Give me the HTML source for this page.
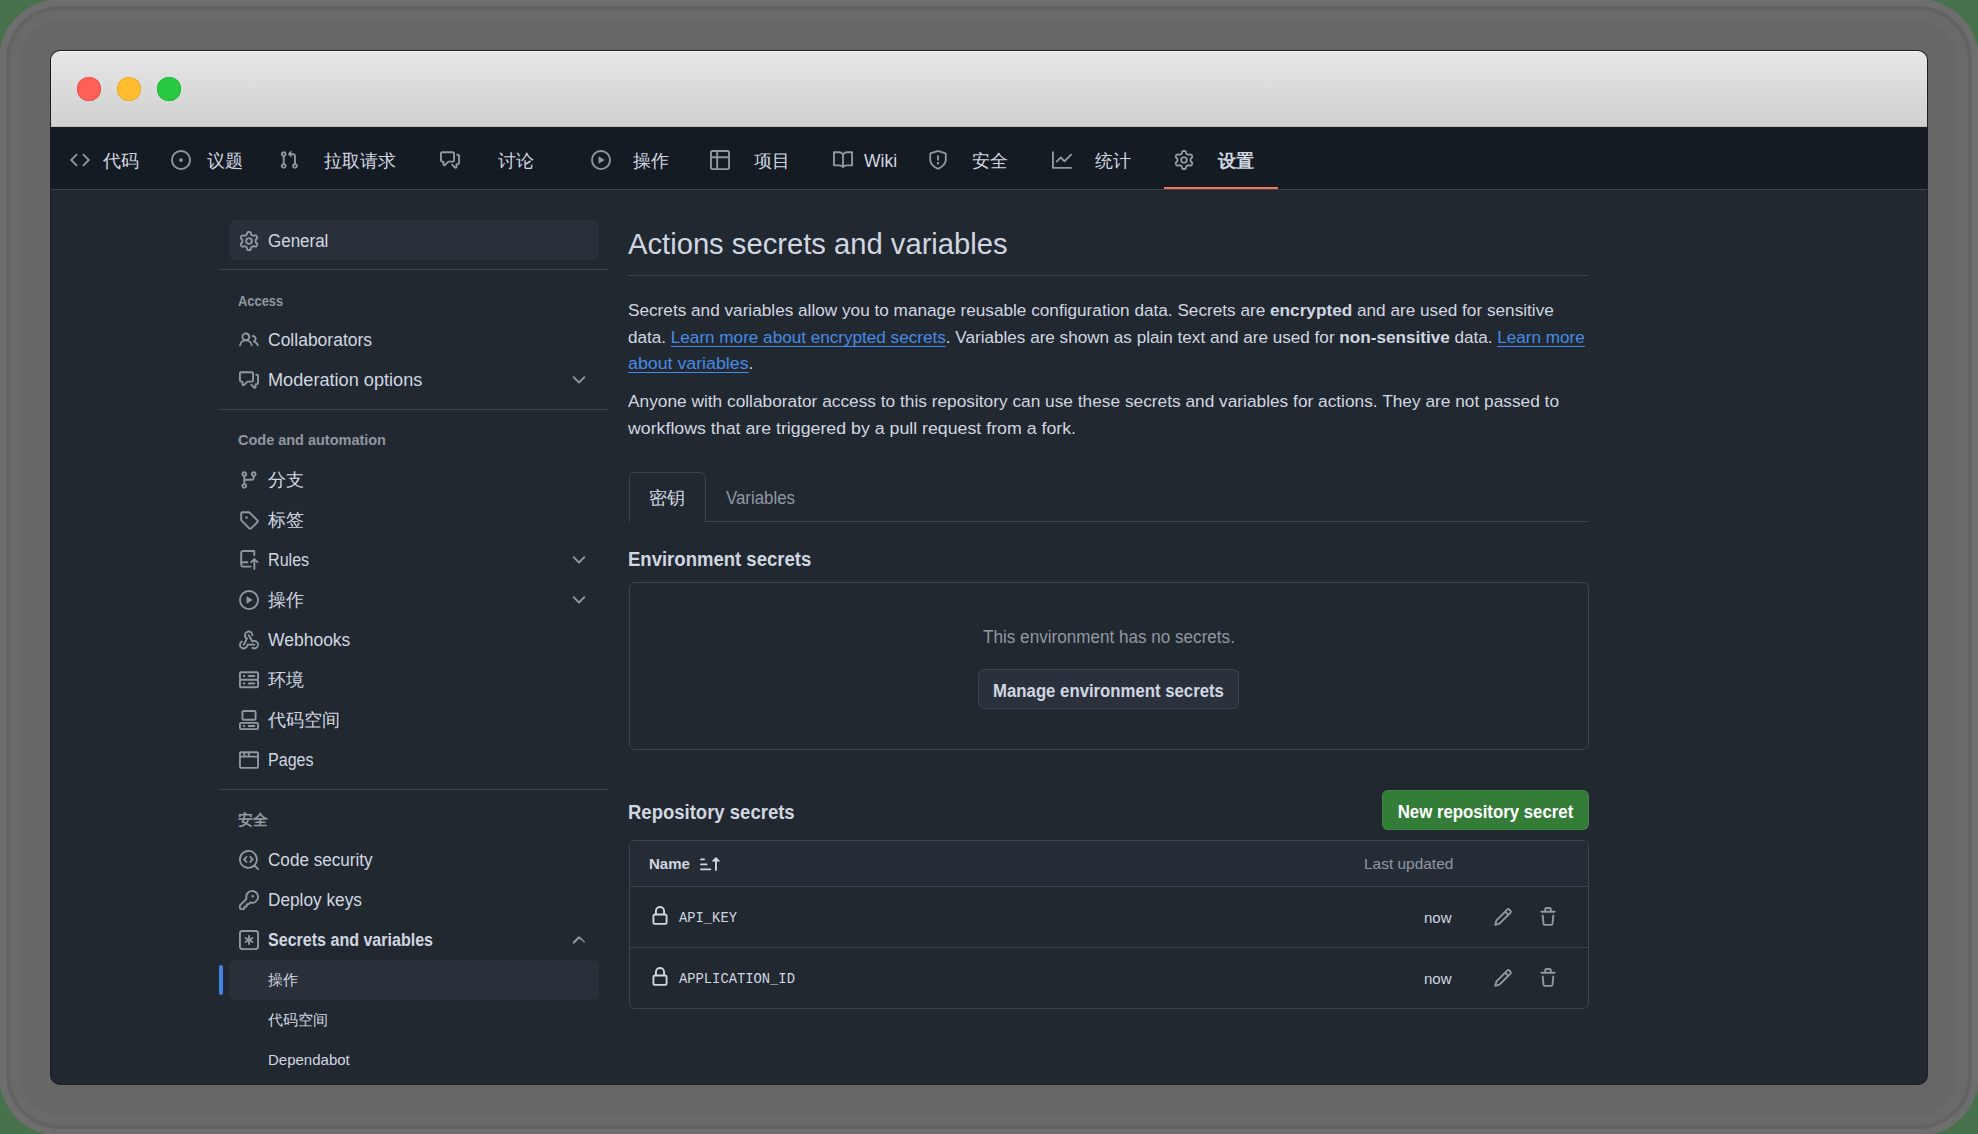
<!DOCTYPE html>
<html><head><meta charset="utf-8">
<style>
*{box-sizing:border-box;margin:0;padding:0}
html,body{width:1978px;height:1134px;overflow:hidden;background:#48724c;font-family:"Liberation Sans",sans-serif}
.a{position:absolute}
.t{white-space:nowrap;color:#d1d7e0}
b{font-weight:700}
u.l{color:#478be6;text-decoration:underline;text-underline-offset:3px;text-decoration-skip-ink:none}
.ring{position:absolute}
#win{position:absolute;left:51px;top:51px;width:1876px;height:1033px;border-radius:9px;overflow:hidden;background:#212830}
#in{position:absolute;left:-51px;top:-51px;width:1978px;height:1134px}
#title{position:absolute;left:51px;top:51px;width:1876px;height:76px;background:linear-gradient(#e6e6e6,#d0d0d0);border-top:1px solid #fafafa;box-shadow:inset 0 -1px 0 #bdbdbd}
.dot{position:absolute;top:77px;width:24px;height:24px;border-radius:50%}
#nav{position:absolute;left:51px;top:127px;width:1876px;height:63px;background:#151b23;border-bottom:1px solid #3d444d}
</style></head>
<body>
<div class="ring" style="left:-1px;top:-1px;width:1980px;height:1137px;border-radius:61px;background:#6e6e6e"></div><div class="ring" style="left:6px;top:6px;width:1966px;height:1123px;border-radius:54px;background:#636363"></div><div class="ring" style="left:10px;top:10px;width:1958px;height:1115px;border-radius:50px;background:#6a6a6a"></div><div class="ring" style="left:20px;top:20px;width:1938px;height:1095px;border-radius:40px;background:#676767"></div><div class="ring" style="left:50px;top:50px;width:1878px;height:1035px;border-radius:10px;background:#1e1e1e"></div>
<div id="win"><div id="in">
<div id="title"></div>
<div class="dot" style="left:77px;background:#ff5f57;box-shadow:inset 0 0 0 .6px #e0443e"></div>
<div class="dot" style="left:117px;background:#febc2e;box-shadow:inset 0 0 0 .6px #dea123"></div>
<div class="dot" style="left:157px;background:#28c840;box-shadow:inset 0 0 0 .6px #1aab29"></div>
<div id="nav"></div>
<svg class="a" style="left:70px;top:150px" width="20" height="20" viewBox="0 0 16 16" fill="#9198a1"><path d="m11.28 3.22 4.25 4.25a.75.75 0 0 1 0 1.06l-4.25 4.25a.749.749 0 0 1-1.275-.326.749.749 0 0 1 .215-.734L13.94 8l-3.72-3.72a.749.749 0 0 1 .326-1.275.749.749 0 0 1 .734.215Zm-6.56 0a.751.751 0 0 1 1.042.018.751.751 0 0 1 .018 1.042L2.06 8l3.72 3.72a.749.749 0 0 1-.326 1.275.749.749 0 0 1-.734-.215L.47 8.53a.75.75 0 0 1 0-1.06Z"/></svg><div class="a t" style="left:103px;top:146.0px;line-height:30px;font-size:17.5px;color:#d1d7e0;font-weight:400;">代码</div><svg class="a" style="left:171px;top:150px" width="20" height="20" viewBox="0 0 16 16" fill="#9198a1"><path d="M8 9.5a1.5 1.5 0 1 0 0-3 1.5 1.5 0 0 0 0 3Z"/><path d="M8 0a8 8 0 1 1 0 16A8 8 0 0 1 8 0ZM1.5 8a6.5 6.5 0 1 0 13 0 6.5 6.5 0 0 0-13 0Z"/></svg><div class="a t" style="left:207px;top:146.0px;line-height:30px;font-size:17.5px;color:#d1d7e0;font-weight:400;">议题</div><svg class="a" style="left:279px;top:150px" width="20" height="20" viewBox="0 0 16 16" fill="#9198a1"><path d="M1.5 3.25a2.25 2.25 0 1 1 3 2.122v5.256a2.251 2.251 0 1 1-1.5 0V5.372A2.25 2.25 0 0 1 1.5 3.25Zm5.677-.177L9.573.677A.25.25 0 0 1 10 .854V2.5h1A2.5 2.5 0 0 1 13.5 5v5.628a2.251 2.251 0 1 1-1.5 0V5a1 1 0 0 0-1-1h-1v1.646a.25.25 0 0 1-.427.177L7.177 3.427a.25.25 0 0 1 0-.354ZM3.75 2.5a.75.75 0 1 0 0 1.5.75.75 0 0 0 0-1.5Zm0 9.5a.75.75 0 1 0 0 1.5.75.75 0 0 0 0-1.5Zm8.25.75a.75.75 0 1 0 1.5 0 .75.75 0 0 0-1.5 0Z"/></svg><div class="a t" style="left:324px;top:146.0px;line-height:30px;font-size:17.5px;color:#d1d7e0;font-weight:400;">拉取请求</div><svg class="a" style="left:440px;top:150px" width="20" height="20" viewBox="0 0 16 16" fill="#9198a1"><path d="M1.75 1h8.5c.966 0 1.75.784 1.75 1.75v5.5A1.75 1.75 0 0 1 10.25 10H7.061l-2.574 2.573A1.458 1.458 0 0 1 2 11.543V10h-.25A1.75 1.75 0 0 1 0 8.25v-5.5C0 1.784.784 1 1.75 1ZM1.5 2.75v5.5c0 .138.112.25.25.25h1a.75.75 0 0 1 .75.75v2.19l2.72-2.72a.749.749 0 0 1 .53-.22h3.5a.25.25 0 0 0 .25-.25v-5.5a.25.25 0 0 0-.25-.25h-8.5a.25.25 0 0 0-.25.25Zm13 2a.25.25 0 0 0-.25-.25h-.5a.75.75 0 0 1 0-1.5h.5c.966 0 1.75.784 1.75 1.75v5.5A1.75 1.75 0 0 1 14.25 12H14v1.543a1.458 1.458 0 0 1-2.487 1.03L9.22 12.28a.749.749 0 0 1 .326-1.275.749.749 0 0 1 .734.215l2.22 2.22v-2.19a.75.75 0 0 1 .75-.75h1a.25.25 0 0 0 .25-.25Z"/></svg><div class="a t" style="left:498px;top:146.0px;line-height:30px;font-size:17.5px;color:#d1d7e0;font-weight:400;">讨论</div><svg class="a" style="left:591px;top:150px" width="20" height="20" viewBox="0 0 16 16" fill="#9198a1"><path d="M8 0a8 8 0 1 1 0 16A8 8 0 0 1 8 0ZM1.5 8a6.5 6.5 0 1 0 13 0 6.5 6.5 0 0 0-13 0Zm4.879-2.773 4.264 2.559a.25.25 0 0 1 0 .428l-4.264 2.559A.25.25 0 0 1 6 10.559V5.442a.25.25 0 0 1 .379-.215Z"/></svg><div class="a t" style="left:633px;top:146.0px;line-height:30px;font-size:17.5px;color:#d1d7e0;font-weight:400;">操作</div><svg class="a" style="left:710px;top:150px" width="20" height="20" viewBox="0 0 16 16" fill="#9198a1"><path d="M0 1.75C0 .784.784 0 1.75 0h12.5C15.216 0 16 .784 16 1.75v12.5A1.75 1.75 0 0 1 14.25 16H1.75A1.75 1.75 0 0 1 0 14.25ZM6.5 6.5v8h7.75a.25.25 0 0 0 .25-.25V6.5Zm8-1.5V1.75a.25.25 0 0 0-.25-.25H6.5V5Zm-13 1.5v7.75c0 .138.112.25.25.25H5v-8ZM5 5V1.5H1.75a.25.25 0 0 0-.25.25V5Z"/></svg><div class="a t" style="left:754px;top:146.0px;line-height:30px;font-size:17.5px;color:#d1d7e0;font-weight:400;">项目</div><svg class="a" style="left:833px;top:150px" width="20" height="20" viewBox="0 0 16 16" fill="#9198a1"><path d="M0 1.75A.75.75 0 0 1 .75 1h4.253c1.227 0 2.317.59 3 1.501A3.743 3.743 0 0 1 11.006 1h4.245a.75.75 0 0 1 .75.75v10.5a.75.75 0 0 1-.75.75h-4.507a2.25 2.25 0 0 0-1.591.659l-.622.621a.75.75 0 0 1-1.06 0l-.622-.621A2.25 2.25 0 0 0 5.258 13H.75a.75.75 0 0 1-.75-.75Zm7.251 10.324.004-5.073-.002-2.253A2.25 2.25 0 0 0 5.003 2.5H1.5v9h3.757a3.75 3.75 0 0 1 1.994.574ZM8.755 4.75l-.004 7.322a3.752 3.752 0 0 1 1.992-.572H14.5v-9h-3.495a2.25 2.25 0 0 0-2.25 2.25Z"/></svg><div class="a t" style="left:864px;top:146.0px;line-height:30px;font-size:17.5px;color:#d1d7e0;font-weight:400;">Wiki</div><svg class="a" style="left:928px;top:150px" width="20" height="20" viewBox="0 0 16 16" fill="#9198a1"><path d="M7.467.133a1.748 1.748 0 0 1 1.066 0l5.25 1.68A1.75 1.75 0 0 1 15 3.48V7c0 1.566-.32 3.182-1.303 4.682-.983 1.498-2.585 2.813-5.032 3.855a1.697 1.697 0 0 1-1.33 0c-2.447-1.042-4.049-2.357-5.032-3.855C1.32 10.182 1 8.566 1 7V3.48a1.755 1.755 0 0 1 1.217-1.667Zm.61 1.429a.25.25 0 0 0-.153 0l-5.25 1.68a.25.25 0 0 0-.174.238V7c0 1.358.275 2.666 1.057 3.86.784 1.194 2.121 2.34 4.366 3.297a.196.196 0 0 0 .154 0c2.245-.956 3.582-2.104 4.366-3.298C13.225 9.666 13.5 8.36 13.5 7V3.48a.251.251 0 0 0-.174-.237l-5.25-1.68ZM8.75 4.750v3a.75.75 0 0 1-1.5 0v-3a.75.75 0 0 1 1.5 0ZM9 10.5a1 1 0 1 1-2 0 1 1 0 0 1 2 0Z"/></svg><div class="a t" style="left:972px;top:146.0px;line-height:30px;font-size:17.5px;color:#d1d7e0;font-weight:400;">安全</div><svg class="a" style="left:1052px;top:150px" width="20" height="20" viewBox="0 0 16 16" fill="#9198a1"><path d="M1.5 1.75V13.5h13.75a.75.75 0 0 1 0 1.5H.75a.75.75 0 0 1-.75-.75V1.75a.75.75 0 0 1 1.5 0Zm14.28 2.53-5.25 5.25a.75.75 0 0 1-1.060 0L7 7.06 4.28 9.78a.751.751 0 0 1-1.042-.018.751.751 0 0 1-.018-1.042l3.25-3.25a.75.75 0 0 1 1.06 0L10 7.94l4.72-4.72a.751.751 0 0 1 1.042.018.751.751 0 0 1 .018 1.042Z"/></svg><div class="a t" style="left:1095px;top:146.0px;line-height:30px;font-size:17.5px;color:#d1d7e0;font-weight:400;">统计</div><svg class="a" style="left:1174px;top:150px" width="20" height="20" viewBox="0 0 16 16" fill="#9198a1"><path d="M8 0a8.2 8.2 0 0 1 .701.031C9.444.095 9.99.645 10.16 1.29l.288 1.107c.018.066.079.158.212.224.231.114.454.243.668.386.123.082.233.09.299.071l1.103-.303c.644-.176 1.392.021 1.82.63.27.385.506.792.704 1.218.315.675.111 1.422-.364 1.891l-.814.806c-.049.048-.098.147-.088.294.016.257.016.515 0 .772-.01.147.038.246.088.294l.814.806c.475.469.679 1.216.364 1.891a7.977 7.977 0 0 1-.704 1.217c-.428.61-1.176.807-1.820.63l-1.102-.302c-.067-.019-.177-.011-.3.071a5.909 5.909 0 0 1-.668.386c-.133.066-.194.158-.211.224l-.29 1.106c-.168.646-.715 1.196-1.458 1.26a8.006 8.006 0 0 1-1.402 0c-.743-.064-1.289-.614-1.458-1.26l-.289-1.106c-.018-.066-.079-.158-.212-.224a5.738 5.738 0 0 1-.668-.386c-.123-.082-.233-.09-.299-.071l-1.103.303c-.644.176-1.392-.021-1.82-.63a8.12 8.12 0 0 1-.704-1.218c-.315-.675-.111-1.422.363-1.891l.815-.806c.05-.048.098-.147.088-.294a6.214 6.214 0 0 1 0-.772c.01-.147-.038-.246-.088-.294l-.815-.806C.635 6.045.431 5.298.746 4.623a7.92 7.92 0 0 1 .704-1.217c.428-.61 1.176-.807 1.82-.63l1.102.302c.067.019.177.011.3-.071.214-.143.437-.272.668-.386.133-.066.194-.158.211-.224l.29-1.106C6.009.645 6.556.095 7.299.03 7.53.01 7.764 0 8 0Zm-.571 1.525c-.036.003-.108.036-.137.146l-.289 1.105c-.147.561-.549.967-.998 1.189-.173.086-.34.183-.5.29-.417.278-.97.423-1.529.27l-1.103-.303c-.109-.03-.175.016-.195.045-.22.312-.412.644-.573.99-.014.031-.021.11.059.19l.815.806c.411.406.562.957.53 1.456a4.709 4.709 0 0 0 0 .582c.032.499-.119 1.05-.53 1.456l-.815.806c-.081.08-.073.159-.059.19.162.346.353.677.573.989.02.03.085.076.195.046l1.102-.303c.56-.153 1.113-.008 1.53.27.161.107.328.204.501.29.447.222.85.629.997 1.189l.289 1.105c.029.109.101.143.137.146a6.6 6.6 0 0 0 1.142 0c.036-.003.108-.036.137-.146l.289-1.105c.147-.561.549-.967.998-1.189.173-.086.34-.183.5-.29.417-.278.97-.423 1.529-.27l1.103.303c.109.029.175-.016.195-.045.22-.313.411-.644.573-.99.014-.031.021-.11-.059-.19l-.815-.806c-.411-.406-.562-.957-.53-1.456a4.709 4.709 0 0 0 0-.582c-.032-.499.119-1.05.53-1.456l.815-.806c.081-.08.073-.159.059-.19a6.464 6.464 0 0 0-.573-.989c-.02-.03-.085-.076-.195-.046l-1.102.303c-.56.153-1.113.008-1.53-.27a4.44 4.44 0 0 0-.501-.29c-.447-.222-.85-.629-.997-1.189l-.289-1.105c-.029-.11-.101-.143-.137-.146a6.6 6.6 0 0 0-1.142 0ZM11 8a3 3 0 1 1-6 0 3 3 0 0 1 6 0ZM9.5 8a1.5 1.5 0 1 0-3.001.001A1.5 1.5 0 0 0 9.5 8Z"/></svg><div class="a t" style="left:1218px;top:146.0px;line-height:30px;font-size:17.5px;color:#d1d7e0;font-weight:700;">设置</div><div class="a" style="left:1164px;top:187px;width:114px;height:2px;background:#ec775c"></div><div class="a" style="left:229px;top:220px;width:370px;height:40px;background:#2a3039;border-radius:6px"></div><svg class="a" style="left:239px;top:231px" width="20" height="20" viewBox="0 0 16 16" fill="#9198a1"><path d="M8 0a8.2 8.2 0 0 1 .701.031C9.444.095 9.99.645 10.16 1.29l.288 1.107c.018.066.079.158.212.224.231.114.454.243.668.386.123.082.233.09.299.071l1.103-.303c.644-.176 1.392.021 1.82.63.27.385.506.792.704 1.218.315.675.111 1.422-.364 1.891l-.814.806c-.049.048-.098.147-.088.294.016.257.016.515 0 .772-.01.147.038.246.088.294l.814.806c.475.469.679 1.216.364 1.891a7.977 7.977 0 0 1-.704 1.217c-.428.61-1.176.807-1.820.63l-1.102-.302c-.067-.019-.177-.011-.3.071a5.909 5.909 0 0 1-.668.386c-.133.066-.194.158-.211.224l-.29 1.106c-.168.646-.715 1.196-1.458 1.26a8.006 8.006 0 0 1-1.402 0c-.743-.064-1.289-.614-1.458-1.26l-.289-1.106c-.018-.066-.079-.158-.212-.224a5.738 5.738 0 0 1-.668-.386c-.123-.082-.233-.09-.299-.071l-1.103.303c-.644.176-1.392-.021-1.82-.63a8.12 8.12 0 0 1-.704-1.218c-.315-.675-.111-1.422.363-1.891l.815-.806c.05-.048.098-.147.088-.294a6.214 6.214 0 0 1 0-.772c.01-.147-.038-.246-.088-.294l-.815-.806C.635 6.045.431 5.298.746 4.623a7.92 7.92 0 0 1 .704-1.217c.428-.61 1.176-.807 1.82-.63l1.102.302c.067.019.177.011.3-.071.214-.143.437-.272.668-.386.133-.066.194-.158.211-.224l.29-1.106C6.009.645 6.556.095 7.299.03 7.53.01 7.764 0 8 0Zm-.571 1.525c-.036.003-.108.036-.137.146l-.289 1.105c-.147.561-.549.967-.998 1.189-.173.086-.34.183-.5.29-.417.278-.97.423-1.529.27l-1.103-.303c-.109-.03-.175.016-.195.045-.22.312-.412.644-.573.99-.014.031-.021.11.059.19l.815.806c.411.406.562.957.53 1.456a4.709 4.709 0 0 0 0 .582c.032.499-.119 1.05-.53 1.456l-.815.806c-.081.08-.073.159-.059.19.162.346.353.677.573.989.02.03.085.076.195.046l1.102-.303c.56-.153 1.113-.008 1.53.27.161.107.328.204.501.29.447.222.85.629.997 1.189l.289 1.105c.029.109.101.143.137.146a6.6 6.6 0 0 0 1.142 0c.036-.003.108-.036.137-.146l.289-1.105c.147-.561.549-.967.998-1.189.173-.086.34-.183.5-.29.417-.278.97-.423 1.529-.27l1.103.303c.109.029.175-.016.195-.045.22-.313.411-.644.573-.99.014-.031.021-.11-.059-.19l-.815-.806c-.411-.406-.562-.957-.53-1.456a4.709 4.709 0 0 0 0-.582c-.032-.499.119-1.05.53-1.456l.815-.806c.081-.08.073-.159.059-.19a6.464 6.464 0 0 0-.573-.989c-.02-.03-.085-.076-.195-.046l-1.102.303c-.56.153-1.113.008-1.53-.27a4.44 4.44 0 0 0-.501-.29c-.447-.222-.85-.629-.997-1.189l-.289-1.105c-.029-.11-.101-.143-.137-.146a6.6 6.6 0 0 0-1.142 0ZM11 8a3 3 0 1 1-6 0 3 3 0 0 1 6 0ZM9.5 8a1.5 1.5 0 1 0-3.001.001A1.5 1.5 0 0 0 9.5 8Z"/></svg><div class="a t" style="left:268px;top:226.0px;line-height:30px;font-size:17.5px;color:#d1d7e0;font-weight:400;;transform:scaleX(0.97);transform-origin:0 50%">General</div><div class="a" style="left:219px;top:269px;width:390px;height:1px;background:#3d444d"></div><div class="a t" style="left:238px;top:286.0px;line-height:30px;font-size:15px;color:#9198a1;font-weight:700;;transform:scaleX(0.86);transform-origin:0 50%">Access</div><svg class="a" style="left:239px;top:330px" width="20" height="20" viewBox="0 0 16 16" fill="#9198a1"><path d="M2 5.5a3.5 3.5 0 1 1 5.898 2.549 5.508 5.508 0 0 1 3.034 4.084.75.75 0 1 1-1.482.235 4 4 0 0 0-7.9 0 .75.75 0 0 1-1.482-.236A5.507 5.507 0 0 1 3.102 8.05 3.493 3.493 0 0 1 2 5.5ZM11 4a3.001 3.001 0 0 1 2.22 5.018 5.01 5.01 0 0 1 2.56 3.012.749.749 0 0 1-.885.954.752.752 0 0 1-.549-.514 3.507 3.507 0 0 0-2.522-2.372.75.75 0 0 1-.574-.73v-.352a.75.75 0 0 1 .416-.672A1.5 1.5 0 0 0 11 5.5.75.75 0 0 1 11 4Zm-5.5-.5a2 2 0 1 0-.001 3.999A2 2 0 0 0 5.5 3.5Z"/></svg><div class="a t" style="left:268px;top:325.0px;line-height:30px;font-size:17.5px;color:#d1d7e0;font-weight:400;">Collaborators</div><svg class="a" style="left:239px;top:370px" width="20" height="20" viewBox="0 0 16 16" fill="#9198a1"><path d="M1.75 1h8.5c.966 0 1.75.784 1.75 1.75v5.5A1.75 1.75 0 0 1 10.25 10H7.061l-2.574 2.573A1.458 1.458 0 0 1 2 11.543V10h-.25A1.75 1.75 0 0 1 0 8.25v-5.5C0 1.784.784 1 1.75 1ZM1.5 2.75v5.5c0 .138.112.25.25.25h1a.75.75 0 0 1 .75.75v2.19l2.72-2.72a.749.749 0 0 1 .53-.22h3.5a.25.25 0 0 0 .25-.25v-5.5a.25.25 0 0 0-.25-.25h-8.5a.25.25 0 0 0-.25.25Zm13 2a.25.25 0 0 0-.25-.25h-.5a.75.75 0 0 1 0-1.5h.5c.966 0 1.75.784 1.75 1.75v5.5A1.75 1.75 0 0 1 14.25 12H14v1.543a1.458 1.458 0 0 1-2.487 1.03L9.22 12.28a.749.749 0 0 1 .326-1.275.749.749 0 0 1 .734.215l2.22 2.22v-2.19a.75.75 0 0 1 .75-.75h1a.25.25 0 0 0 .25-.25Z"/></svg><div class="a t" style="left:268px;top:365.0px;line-height:30px;font-size:17.5px;color:#d1d7e0;font-weight:400;;transform:scaleX(1.037);transform-origin:0 50%">Moderation options</div><svg class="a" style="left:569px;top:370px" width="20" height="20" viewBox="0 0 16 16" fill="#9198a1"><path d="M12.78 5.22a.749.749 0 0 1 0 1.06l-4.25 4.25a.749.749 0 0 1-1.06 0L3.22 6.28a.749.749 0 0 1 .326-1.275.749.749 0 0 1 .734.215L8 8.939l3.72-3.719a.749.749 0 0 1 1.06 0Z"/></svg><div class="a" style="left:219px;top:409px;width:390px;height:1px;background:#3d444d"></div><div class="a t" style="left:238px;top:425.0px;line-height:30px;font-size:15px;color:#9198a1;font-weight:700;;transform:scaleX(0.965);transform-origin:0 50%">Code and automation</div><svg class="a" style="left:239px;top:470px" width="20" height="20" viewBox="0 0 16 16" fill="#9198a1"><path d="M9.5 3.25a2.25 2.25 0 1 1 3 2.122V6A2.5 2.5 0 0 1 10 8.5H6a1 1 0 0 0-1 1v1.128a2.251 2.251 0 1 1-1.5 0V5.372a2.25 2.25 0 1 1 1.5 0v1.836A2.493 2.493 0 0 1 6 7h4a1 1 0 0 0 1-1v-.628A2.25 2.25 0 0 1 9.5 3.25Zm-6 0a.75.75 0 1 0 1.5 0 .75.75 0 0 0-1.5 0Zm8.25-.75a.75.75 0 1 0 0 1.5.75.75 0 0 0 0-1.5ZM4.25 12a.75.75 0 1 0 0 1.5.75.75 0 0 0 0-1.5Z"/></svg><div class="a t" style="left:268px;top:465.0px;line-height:30px;font-size:17.5px;color:#d1d7e0;font-weight:400;">分支</div><svg class="a" style="left:239px;top:510px" width="20" height="20" viewBox="0 0 16 16" fill="#9198a1"><path d="M1 7.775V2.75C1 1.784 1.784 1 2.75 1h5.025c.464 0 .91.184 1.238.513l6.25 6.25a1.75 1.75 0 0 1 0 2.474l-5.026 5.026a1.75 1.75 0 0 1-2.474 0l-6.25-6.25A1.752 1.752 0 0 1 1 7.775Zm1.5 0c0 .066.026.13.073.177l6.25 6.25a.25.25 0 0 0 .354 0l5.025-5.025a.25.25 0 0 0 0-.354l-6.25-6.25a.25.25 0 0 0-.177-.073H2.75a.25.25 0 0 0-.25.25ZM6 5a1 1 0 1 1 0 2 1 1 0 0 1 0-2Z"/></svg><div class="a t" style="left:268px;top:505.0px;line-height:30px;font-size:17.5px;color:#d1d7e0;font-weight:400;">标签</div><svg class="a" style="left:239px;top:550px" width="20" height="20" viewBox="0 0 16 16" fill="#9198a1"><path d="M1 2.5A2.5 2.5 0 0 1 3.5 0h8.75a.75.75 0 0 1 .75.75v3.5a.75.75 0 0 1-1.5 0V1.5h-8a1 1 0 0 0-1 1v6.708A2.492 2.492 0 0 1 3.5 9h3.25a.75.75 0 0 1 0 1.5H3.5a1 1 0 0 0 0 2h5.75a.75.75 0 0 1 0 1.5H3.5A2.5 2.5 0 0 1 1 11.5Zm13.23 7.79h-.001l-1.224-1.224v6.184a.75.75 0 0 1-1.5 0V9.066L10.28 10.29a.75.75 0 0 1-1.060-1.061l2.505-2.504a.75.75 0 0 1 1.06 0L15.29 9.23a.751.751 0 0 1-.018 1.042.751.751 0 0 1-1.042.018Z"/></svg><div class="a t" style="left:268px;top:545.0px;line-height:30px;font-size:17.5px;color:#d1d7e0;font-weight:400;;transform:scaleX(0.92);transform-origin:0 50%">Rules</div><svg class="a" style="left:569px;top:550px" width="20" height="20" viewBox="0 0 16 16" fill="#9198a1"><path d="M12.78 5.22a.749.749 0 0 1 0 1.06l-4.25 4.25a.749.749 0 0 1-1.06 0L3.22 6.28a.749.749 0 0 1 .326-1.275.749.749 0 0 1 .734.215L8 8.939l3.72-3.719a.749.749 0 0 1 1.06 0Z"/></svg><svg class="a" style="left:239px;top:590px" width="20" height="20" viewBox="0 0 16 16" fill="#9198a1"><path d="M8 0a8 8 0 1 1 0 16A8 8 0 0 1 8 0ZM1.5 8a6.5 6.5 0 1 0 13 0 6.5 6.5 0 0 0-13 0Zm4.879-2.773 4.264 2.559a.25.25 0 0 1 0 .428l-4.264 2.559A.25.25 0 0 1 6 10.559V5.442a.25.25 0 0 1 .379-.215Z"/></svg><div class="a t" style="left:268px;top:585.0px;line-height:30px;font-size:17.5px;color:#d1d7e0;font-weight:400;">操作</div><svg class="a" style="left:569px;top:590px" width="20" height="20" viewBox="0 0 16 16" fill="#9198a1"><path d="M12.78 5.22a.749.749 0 0 1 0 1.06l-4.25 4.25a.749.749 0 0 1-1.06 0L3.22 6.28a.749.749 0 0 1 .326-1.275.749.749 0 0 1 .734.215L8 8.939l3.72-3.719a.749.749 0 0 1 1.06 0Z"/></svg><svg class="a" style="left:239px;top:630px" width="20" height="20" viewBox="0 0 16 16" fill="#9198a1"><path d="M5.5 4.25a2.25 2.25 0 0 1 4.5 0 .75.75 0 0 0 1.5 0 3.75 3.75 0 1 0-6.14 2.889l-2.272 4.258a.75.75 0 0 0 1.324.706L7 7.25a.75.75 0 0 0-.309-1.015A2.25 2.25 0 0 1 5.5 4.25Z"/><path d="M7.364 3.607a.75.75 0 0 1 1.03.257l2.608 4.349a3.75 3.75 0 1 1-.628 6.785.75.75 0 0 1 .752-1.299 2.25 2.25 0 1 0-.033-3.88.75.75 0 0 1-1.03-.256L7.107 4.636a.75.75 0 0 1 .257-1.030Z"/><path d="M2.9 8.776A.75.75 0 0 1 2.625 9.8 2.25 2.25 0 1 0 6 11.75a.75.75 0 0 1 .75-.751h5.5a.75.75 0 0 1 0 1.5H7.425a3.751 3.751 0 1 1-5.550-3.998.75.75 0 0 1 1.024.274Z"/></svg><div class="a t" style="left:268px;top:625.0px;line-height:30px;font-size:17.5px;color:#d1d7e0;font-weight:400;">Webhooks</div><svg class="a" style="left:239px;top:670px" width="20" height="20" viewBox="0 0 16 16" fill="#9198a1"><path d="M1.75 1h12.5c.966 0 1.75.784 1.75 1.75v4c0 .372-.116.717-.314 1 .198.283.314.628.314 1v4a1.75 1.75 0 0 1-1.75 1.75H1.75A1.75 1.75 0 0 1 0 12.75v-4c0-.358.109-.707.314-1a1.739 1.739 0 0 1-.314-1v-4C0 1.784.784 1 1.75 1ZM1.5 2.75v4c0 .138.112.25.25.25h12.5a.25.25 0 0 0 .25-.25v-4a.25.25 0 0 0-.25-.25H1.75a.25.25 0 0 0-.25.25Zm.25 5.75a.25.25 0 0 0-.25.25v4c0 .138.112.25.25.25h12.5a.25.25 0 0 0 .25-.25v-4a.25.25 0 0 0-.25-.25ZM7 4.75A.75.75 0 0 1 7.75 4h4.5a.75.75 0 0 1 0 1.5h-4.5A.75.75 0 0 1 7 4.75ZM7.75 10h4.5a.75.75 0 0 1 0 1.5h-4.5a.75.75 0 0 1 0-1.5ZM3 4.750A.75.75 0 0 1 3.75 4h.5a.75.75 0 0 1 0 1.5h-.5A.75.75 0 0 1 3 4.75ZM3.75 10h.5a.75.75 0 0 1 0 1.5h-.5a.75.75 0 0 1 0-1.5Z"/></svg><div class="a t" style="left:268px;top:665.0px;line-height:30px;font-size:17.5px;color:#d1d7e0;font-weight:400;">环境</div><svg class="a" style="left:239px;top:710px" width="20" height="20" viewBox="0 0 16 16" fill="#9198a1"><path d="M0 11.25c0-.966.784-1.75 1.75-1.75h12.5c.966 0 1.75.784 1.75 1.75v3A1.75 1.75 0 0 1 14.25 16H1.75A1.75 1.75 0 0 1 0 14.25Zm2-9.5C2 .784 2.784 0 3.75 0h8.5C13.216 0 14 .784 14 1.75v5a1.75 1.75 0 0 1-1.75 1.75h-8.5A1.75 1.75 0 0 1 2 6.75Zm1.75-.25a.25.25 0 0 0-.25.25v5c0 .138.112.25.25.25h8.5a.25.25 0 0 0 .25-.25v-5a.25.25 0 0 0-.25-.25Zm-2 9.5a.25.25 0 0 0-.25.25v3c0 .138.112.25.25.25h12.5a.25.25 0 0 0 .25-.25v-3a.25.25 0 0 0-.25-.25Z"/><path d="M7 12.75a.75.75 0 0 1 .75-.75h4.5a.75.75 0 0 1 0 1.5h-4.5a.75.75 0 0 1-.75-.75Zm-4 0a.75.75 0 0 1 .75-.75h.5a.75.75 0 0 1 0 1.5h-.5a.75.75 0 0 1-.75-.75Z"/></svg><div class="a t" style="left:268px;top:705.0px;line-height:30px;font-size:17.5px;color:#d1d7e0;font-weight:400;">代码空间</div><svg class="a" style="left:239px;top:750px" width="20" height="20" viewBox="0 0 16 16" fill="#9198a1"><path d="M0 2.75C0 1.784.784 1 1.75 1h12.5c.966 0 1.75.784 1.75 1.75v10.5A1.75 1.75 0 0 1 14.25 15H1.75A1.75 1.75 0 0 1 0 13.25ZM14.5 6h-13v7.25c0 .138.112.25.25.25h12.5a.25.25 0 0 0 .25-.25Zm-6-3.5v2h6V2.75a.25.25 0 0 0-.25-.25ZM5 2.5v2h2v-2Zm-3.25 0a.25.25 0 0 0-.25.25V4.5h2v-2Z"/></svg><div class="a t" style="left:268px;top:745.0px;line-height:30px;font-size:17.5px;color:#d1d7e0;font-weight:400;;transform:scaleX(0.917);transform-origin:0 50%">Pages</div><div class="a" style="left:219px;top:789px;width:390px;height:1px;background:#3d444d"></div><div class="a t" style="left:238px;top:805.0px;line-height:30px;font-size:15px;color:#9198a1;font-weight:700;">安全</div><svg class="a" style="left:239px;top:850px" width="20" height="20" viewBox="0 0 16 16" fill="#9198a1"><path d="M8.47 4.97a.75.75 0 0 0 0 1.06L9.94 7.5 8.47 8.97a.75.75 0 1 0 1.06 1.06l2-2a.75.75 0 0 0 0-1.06l-2-2a.75.75 0 0 0-1.06 0ZM6.53 6.03a.75.75 0 0 0-1.06-1.06l-2 2a.75.75 0 0 0 0 1.06l2 2a.75.75 0 1 0 1.06-1.06L5.06 7.5l1.47-1.47Z"/><path d="M12.246 13.307a7.501 7.501 0 1 1 1.06-1.060l2.474 2.473a.749.749 0 0 1-.326 1.275.749.749 0 0 1-.734-.215ZM1.5 7.5a6.002 6.002 0 0 0 3.725 5.552 6.002 6.002 0 0 0 6.112-.988 6 6 0 0 0 1.063-1.088A6.002 6.002 0 0 0 7.5 1.5a6 6 0 0 0-6 6Z"/></svg><div class="a t" style="left:268px;top:845.0px;line-height:30px;font-size:17.5px;color:#d1d7e0;font-weight:400;;transform:scaleX(0.978);transform-origin:0 50%">Code security</div><svg class="a" style="left:239px;top:890px" width="20" height="20" viewBox="0 0 16 16" fill="#9198a1"><path d="M10.5 0a5.499 5.499 0 1 1-1.288 10.848l-.932.932a.749.749 0 0 1-.53.22H7v.75a.749.749 0 0 1-.22.53l-.5.5a.749.749 0 0 1-.53.22H5v.75a.749.749 0 0 1-.22.53l-.5.5a.749.749 0 0 1-.53.22h-2A1.75 1.75 0 0 1 0 14.25v-2c0-.199.079-.389.22-.53l4.932-4.932A5.5 5.5 0 0 1 10.5 0Zm-4 5.5c-.001.431.069.86.205 1.269a.75.75 0 0 1-.181.768L1.5 12.56v1.69c0 .138.112.25.25.25h1.69l.06-.06v-1.19a.75.75 0 0 1 .75-.75h1.19l.06-.06v-1.19a.75.75 0 0 1 .75-.75h1.19l1.023-1.025a.75.75 0 0 1 .768-.18A4 4 0 1 0 6.5 5.5ZM11 6a1 1 0 1 1 0-2 1 1 0 0 1 0 2Z"/></svg><div class="a t" style="left:268px;top:885.0px;line-height:30px;font-size:17.5px;color:#d1d7e0;font-weight:400;;transform:scaleX(0.985);transform-origin:0 50%">Deploy keys</div><svg class="a" style="left:239px;top:930px" width="20" height="20" viewBox="0 0 16 16" fill="#9198a1"><path d="M0 2.75A2.75 2.75 0 0 1 2.75 0h10.5A2.75 2.75 0 0 1 16 2.75v10.5A2.75 2.75 0 0 1 13.25 16H2.75A2.75 2.75 0 0 1 0 13.25ZM2.75 1.5c-.69 0-1.25.56-1.25 1.25v10.5c0 .69.56 1.25 1.25 1.25h10.5c.69 0 1.25-.56 1.25-1.25V2.75c0-.69-.56-1.25-1.25-1.25Z"/><path d="M8 4a.75.75 0 0 1 .75.75V6.7l1.69-.975a.75.75 0 0 1 .75 1.3L9.5 8l1.69.976a.75.75 0 0 1-.75 1.298L8.75 9.3v1.951a.75.75 0 0 1-1.5 0V9.299l-1.69.976a.75.75 0 0 1-.75-1.3L6.5 8l-1.69-.975a.75.75 0 0 1 .75-1.3l1.69.976V4.75A.75.75 0 0 1 8 4Z"/></svg><div class="a t" style="left:268px;top:925.0px;line-height:30px;font-size:17.5px;color:#d1d7e0;font-weight:700;;transform:scaleX(0.917);transform-origin:0 50%">Secrets and variables</div><svg class="a" style="left:569px;top:930px" width="20" height="20" viewBox="0 0 16 16" fill="#9198a1"><path d="M3.22 10.53a.749.749 0 0 1 0-1.06l4.25-4.25a.749.749 0 0 1 1.06 0l4.25 4.25a.749.749 0 0 1-1.275.326.749.749 0 0 1-.215-.734L8 7.061l-3.72 3.719a.749.749 0 0 1-1.06 0Z"/></svg><div class="a" style="left:229px;top:960px;width:370px;height:40px;background:#2a3039;border-radius:6px"></div><div class="a" style="left:219px;top:965px;width:4px;height:30px;background:#4184e4;border-radius:2px"></div><div class="a t" style="left:268px;top:965.0px;line-height:30px;font-size:15px;color:#d1d7e0;font-weight:400;">操作</div><div class="a t" style="left:268px;top:1005.0px;line-height:30px;font-size:15px;color:#d1d7e0;font-weight:400;">代码空间</div><div class="a t" style="left:268px;top:1045.0px;line-height:30px;font-size:15px;color:#d1d7e0;font-weight:400;">Dependabot</div><div class="a t" style="left:628px;top:224.0px;line-height:40px;font-size:29.2px;color:#d1d7e0;font-weight:400;">Actions secrets and variables</div><div class="a" style="left:628px;top:275px;width:960px;height:1px;background:#3d444d"></div><div class="a t" style="left:628px;top:297px;line-height:26.5px;font-size:17.2px;transform:scaleX(1.0);transform-origin:0 50%">Secrets and variables allow you to manage reusable configuration data. Secrets are <b>encrypted</b> and are used for sensitive</div><div class="a t" style="left:628px;top:323.5px;line-height:26.5px;font-size:17.2px;transform:scaleX(0.9958);transform-origin:0 50%">data. <u class="l">Learn more about encrypted secrets</u>. Variables are shown as plain text and are used for <b>non-sensitive</b> data. <u class="l">Learn more</u></div><div class="a t" style="left:628px;top:350px;line-height:26.5px;font-size:17.2px;transform:scaleX(1.034);transform-origin:0 50%"><u class="l">about variables</u>.</div><div class="a t" style="left:628px;top:388px;line-height:26.5px;font-size:17.2px;transform:scaleX(1.006);transform-origin:0 50%">Anyone with collaborator access to this repository can use these secrets and variables for actions. They are not passed to</div><div class="a t" style="left:628px;top:414.5px;line-height:26.5px;font-size:17.2px;transform:scaleX(1.033);transform-origin:0 50%">workflows that are triggered by a pull request from a fork.</div><div class="a" style="left:705px;top:521px;width:883px;height:1px;background:#3d444d"></div><div class="a" style="left:629px;top:472px;width:77px;height:50px;border:1px solid #3d444d;border-bottom:none;border-radius:6px 6px 0 0;background:#212830"></div><div class="a t" style="left:649px;top:483.0px;line-height:30px;font-size:17.5px;color:#d1d7e0;font-weight:400;">密钥</div><div class="a t" style="left:726px;top:483.0px;line-height:30px;font-size:17.5px;color:#9198a1;font-weight:400;;transform:scaleX(0.963);transform-origin:0 50%">Variables</div><div class="a t" style="left:628px;top:544.0px;line-height:30px;font-size:19.5px;color:#d1d7e0;font-weight:700;;transform:scaleX(0.95);transform-origin:0 50%">Environment secrets</div><div class="a" style="left:629px;top:582px;width:960px;height:168px;border:1px solid #3d444d;border-radius:6px"></div><div class="a t" style="left:629px;width:960px;text-align:center;top:622px;line-height:30px;font-size:17.5px;color:#9198a1;transform:scaleX(0.977)">This environment has no secrets.</div><div class="a" style="left:978px;top:669px;width:261px;height:40px;border:1px solid #3d444d;border-radius:6px;background:#2a313c"></div><div class="a t" style="left:978px;width:261px;text-align:center;top:676px;line-height:30px;font-size:17.5px;font-weight:700;transform:scaleX(0.957)">Manage environment secrets</div><div class="a t" style="left:628px;top:797.0px;line-height:30px;font-size:19.5px;color:#d1d7e0;font-weight:700;;transform:scaleX(0.949);transform-origin:0 50%">Repository secrets</div><div class="a" style="left:1382px;top:790px;width:207px;height:40px;background:#347d39;border-radius:6px;border:1px solid rgba(255,255,255,.08)"></div><div class="a t" style="left:1382px;width:207px;text-align:center;top:797px;line-height:30px;font-size:17.5px;font-weight:700;color:#fff;transform:scaleX(0.96)">New repository secret</div><div class="a" style="left:629px;top:840px;width:960px;height:169px;border:1px solid #3d444d;border-radius:6px;overflow:hidden;background:#212830"></div><div class="a" style="left:630px;top:841px;width:958px;height:45px;background:#262c36;border-radius:5px 5px 0 0"></div><div class="a" style="left:630px;top:886px;width:958px;height:1px;background:#3d444d"></div><div class="a" style="left:630px;top:947px;width:958px;height:1px;background:#3d444d"></div><div class="a t" style="left:649px;top:849.0px;line-height:30px;font-size:15px;color:#d1d7e0;font-weight:700;">Name</div><svg class="a" style="left:700px;top:853.6px" width="20" height="20" viewBox="0 0 16 16" fill="#d1d7e0"><path d="m12.927 2.573 3 3A.25.25 0 0 1 15.75 6H13.5v6.75a.75.75 0 0 1-1.5 0V6H9.75a.25.25 0 0 1-.177-.427l3-3a.25.25 0 0 1 .354 0ZM0 12.25a.75.75 0 0 1 .75-.75h7.5a.75.75 0 0 1 0 1.5H.75a.75.75 0 0 1-.75-.75Zm0-4a.75.75 0 0 1 .75-.75h4.5a.75.75 0 0 1 0 1.5H.75A.75.75 0 0 1 0 8.25Zm0-4a.75.75 0 0 1 .75-.75h2.5a.75.75 0 0 1 0 1.5H.75A.75.75 0 0 1 0 4.25Z"/></svg><div class="a t" style="left:1364px;top:849.0px;line-height:30px;font-size:15px;color:#9198a1;font-weight:400;;transform:scaleX(1.03);transform-origin:0 50%">Last updated</div><svg class="a" style="left:650px;top:906px" width="20" height="20" viewBox="0 0 16 16" fill="#d1d7e0"><path d="M4 4a4 4 0 0 1 8 0v2h.25c.966 0 1.75.784 1.75 1.75v5.5A1.75 1.75 0 0 1 12.25 15h-8.5A1.75 1.75 0 0 1 2 13.25v-5.5C2 6.784 2.784 6 3.75 6H4Zm8.25 3.5h-8.5a.25.25 0 0 0-.25.25v5.5c0 .138.112.25.25.25h8.5a.25.25 0 0 0 .25-.25v-5.5a.25.25 0 0 0-.25-.25ZM10.5 6V4a2.5 2.5 0 1 0-5 0v2Z"/></svg><div class="a t" style="left:679px;top:904.0px;line-height:30px;font-size:13.8px;color:#d1d7e0;font-weight:400;font-family:'Liberation Mono',monospace">API_KEY</div><div class="a t" style="left:1424px;top:903.0px;line-height:30px;font-size:15px;color:#d1d7e0;font-weight:400;">now</div><svg class="a" style="left:1493px;top:907px" width="20" height="20" viewBox="0 0 16 16" fill="#9198a1"><path d="M11.013 1.427a1.75 1.75 0 0 1 2.474 0l1.086 1.086a1.75 1.75 0 0 1 0 2.474l-8.61 8.61c-.21.21-.47.364-.756.445l-3.251.93a.75.75 0 0 1-.927-.928l.929-3.25c.081-.286.235-.547.445-.758l8.61-8.61Zm.176 4.823L9.75 4.81l-6.286 6.287a.253.253 0 0 0-.064.108l-.558 1.953 1.953-.558a.253.253 0 0 0 .108-.064Zm1.238-3.763a.25.25 0 0 0-.354 0L10.811 3.75l1.439 1.44 1.263-1.263a.25.25 0 0 0 0-.354Z"/></svg><svg class="a" style="left:1538px;top:907px" width="20" height="20" viewBox="0 0 16 16" fill="#9198a1"><path d="M11 1.75V3h2.25a.75.75 0 0 1 0 1.5H2.75a.75.75 0 0 1 0-1.5H5V1.75C5 .784 5.784 0 6.75 0h2.5C10.216 0 11 .784 11 1.75ZM4.496 6.675l.66 6.6a.25.25 0 0 0 .249.225h5.19a.25.25 0 0 0 .249-.225l.66-6.6a.75.75 0 0 1 1.492.149l-.66 6.6A1.748 1.748 0 0 1 10.595 15h-5.19a1.75 1.75 0 0 1-1.741-1.575l-.66-6.6a.75.75 0 1 1 1.492-.15ZM6.5 1.75V3h3V1.75a.25.25 0 0 0-.25-.25h-2.5a.25.25 0 0 0-.25.25Z"/></svg><svg class="a" style="left:650px;top:967px" width="20" height="20" viewBox="0 0 16 16" fill="#d1d7e0"><path d="M4 4a4 4 0 0 1 8 0v2h.25c.966 0 1.75.784 1.75 1.75v5.5A1.75 1.75 0 0 1 12.25 15h-8.5A1.75 1.75 0 0 1 2 13.25v-5.5C2 6.784 2.784 6 3.75 6H4Zm8.25 3.5h-8.5a.25.25 0 0 0-.25.25v5.5c0 .138.112.25.25.25h8.5a.25.25 0 0 0 .25-.25v-5.5a.25.25 0 0 0-.25-.25ZM10.5 6V4a2.5 2.5 0 1 0-5 0v2Z"/></svg><div class="a t" style="left:679px;top:965.0px;line-height:30px;font-size:13.8px;color:#d1d7e0;font-weight:400;font-family:'Liberation Mono',monospace">APPLICATION_ID</div><div class="a t" style="left:1424px;top:964.0px;line-height:30px;font-size:15px;color:#d1d7e0;font-weight:400;">now</div><svg class="a" style="left:1493px;top:968px" width="20" height="20" viewBox="0 0 16 16" fill="#9198a1"><path d="M11.013 1.427a1.75 1.75 0 0 1 2.474 0l1.086 1.086a1.75 1.75 0 0 1 0 2.474l-8.61 8.61c-.21.21-.47.364-.756.445l-3.251.93a.75.75 0 0 1-.927-.928l.929-3.25c.081-.286.235-.547.445-.758l8.61-8.61Zm.176 4.823L9.75 4.81l-6.286 6.287a.253.253 0 0 0-.064.108l-.558 1.953 1.953-.558a.253.253 0 0 0 .108-.064Zm1.238-3.763a.25.25 0 0 0-.354 0L10.811 3.75l1.439 1.44 1.263-1.263a.25.25 0 0 0 0-.354Z"/></svg><svg class="a" style="left:1538px;top:968px" width="20" height="20" viewBox="0 0 16 16" fill="#9198a1"><path d="M11 1.75V3h2.25a.75.75 0 0 1 0 1.5H2.75a.75.75 0 0 1 0-1.5H5V1.75C5 .784 5.784 0 6.75 0h2.5C10.216 0 11 .784 11 1.75ZM4.496 6.675l.66 6.6a.25.25 0 0 0 .249.225h5.19a.25.25 0 0 0 .249-.225l.66-6.6a.75.75 0 0 1 1.492.149l-.66 6.6A1.748 1.748 0 0 1 10.595 15h-5.19a1.75 1.75 0 0 1-1.741-1.575l-.66-6.6a.75.75 0 1 1 1.492-.15ZM6.5 1.75V3h3V1.75a.25.25 0 0 0-.25-.25h-2.5a.25.25 0 0 0-.25.25Z"/></svg>
</div></div>
</body></html>
